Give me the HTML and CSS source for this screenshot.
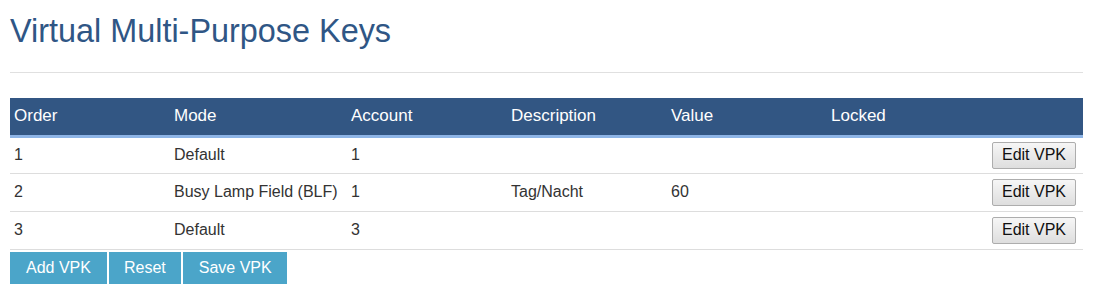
FILE: index.html
```html
<!DOCTYPE html>
<html>
<head>
<meta charset="utf-8">
<link rel="stylesheet" href="styles.css">
</head>
<body>
<div class="page">
  <h1 class="title">Virtual Multi-Purpose Keys</h1>
  <hr class="rule">
  <table class="vpk-table">
    <colgroup>
      <col class="c-order"><col class="c-mode"><col class="c-account"><col class="c-desc"><col class="c-value"><col class="c-locked"><col>
    </colgroup>
    <thead>
      <tr><th>Order</th><th>Mode</th><th>Account</th><th>Description</th><th>Value</th><th>Locked</th><th></th></tr>
    </thead>
    <tbody>
      <tr><td>1</td><td>Default</td><td>1</td><td></td><td></td><td></td><td class="act"><button class="edit-btn">Edit VPK</button></td></tr>
      <tr><td>2</td><td>Busy Lamp Field (BLF)</td><td>1</td><td>Tag/Nacht</td><td>60</td><td></td><td class="act"><button class="edit-btn">Edit VPK</button></td></tr>
      <tr><td>3</td><td>Default</td><td>3</td><td></td><td></td><td></td><td class="act"><button class="edit-btn">Edit VPK</button></td></tr>
    </tbody>
  </table>
  <div class="actions">
    <button class="action-btn btn-add">Add VPK</button>
    <button class="action-btn btn-reset">Reset</button>
    <button class="action-btn btn-save">Save VPK</button>
  </div>
</div>
</body>
</html>
```

FILE: styles.css
```css
html, body {
  margin: 0;
  padding: 0;
  background: #ffffff;
}
body {
  font-family: "Liberation Sans", Arial, sans-serif;
  font-size: 16px;
  color: #333333;
}
.page {
  padding: 0 20px 0 10px;
}
.title {
  margin: 13px 0 0;
  font-size: 32.4px;
  line-height: 37px;
  font-weight: normal;
  color: #2f5685;
}
.rule {
  margin: 22px 0 0;
  border: 0;
  border-top: 1px solid #e0e0e0;
  height: 0;
}
.vpk-table {
  margin-top: 25px;
  width: 100%;
  border-collapse: collapse;
  table-layout: fixed;
}
.c-order { width: 160px; }
.c-mode { width: 177px; }
.c-account { width: 160px; }
.c-desc { width: 160px; }
.c-value { width: 160px; }
.c-locked { width: 160px; }
.vpk-table th {
  background: #325683;
  color: #ffffff;
  font-size: 17px;
  font-weight: normal;
  text-align: left;
  height: 38px;
  padding: 0 4px;
  border-bottom: 3px solid #8db4e6;
  box-sizing: border-box;
}
.vpk-table td {
  height: 38px;
  padding: 0 4px;
  border-bottom: 1px solid #dddddd;
  box-sizing: border-box;
  white-space: nowrap;
}
.vpk-table tbody tr:first-child td {
  height: 37px;
}
.vpk-table td.act {
  text-align: right;
  padding-right: 7px;
}
.edit-btn {
  font-family: "Liberation Sans", Arial, sans-serif;
  font-size: 16px;
  color: #111111;
  height: 27px;
  padding: 0 9px;
  border: 1px solid #adadad;
  border-radius: 2px;
  background: linear-gradient(#f6f6f6, #dedede);
  vertical-align: middle;
}
.actions {
  display: flex;
  gap: 2px;
  margin-top: 2px;
}
.action-btn {
  font-family: "Liberation Sans", Arial, sans-serif;
  font-size: 16px;
  color: #ffffff;
  background: #4ba5c9;
  border: 0;
  height: 32px;
  margin: 0;
}
.btn-add { padding: 0 16px; }
.btn-reset { padding: 0 15px; }
.btn-save { padding: 0 15px 0 16px; }
```
